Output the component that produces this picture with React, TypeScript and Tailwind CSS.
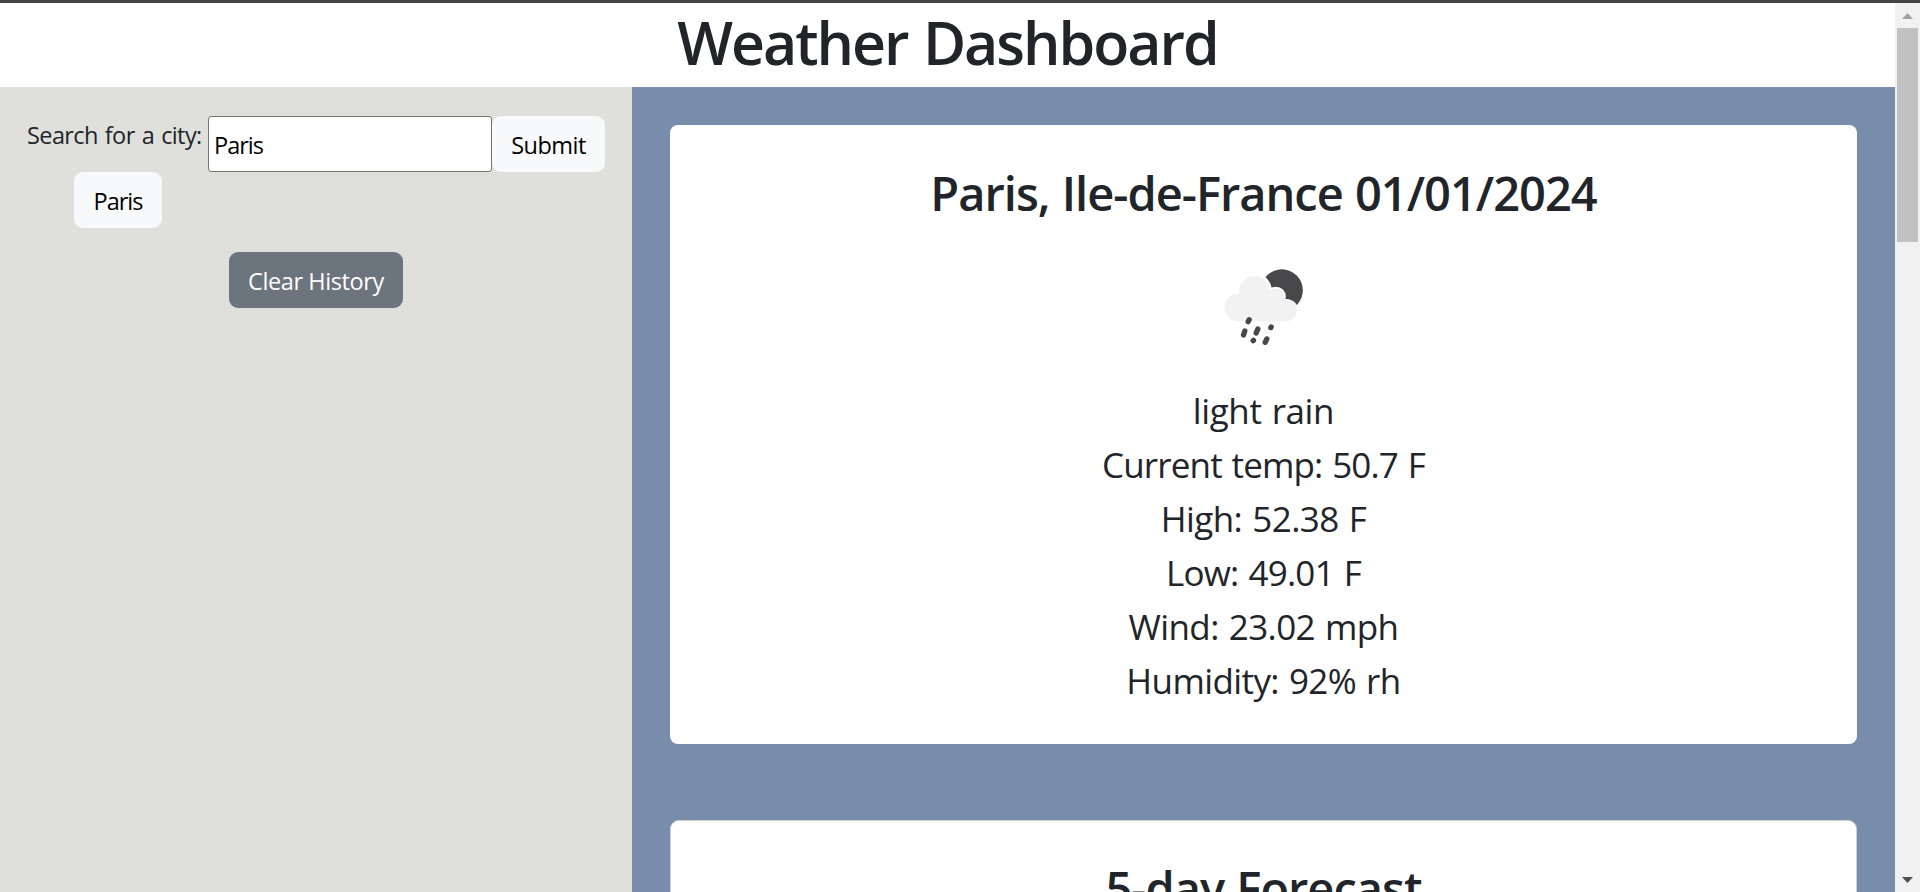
const readings = [
  { text: 'light rain', spacing: 'tracking-[-0.4px]' },
  { text: 'Current temp: 50.7 F', spacing: 'tracking-[-0.85px]' },
  { text: 'High: 52.38 F', spacing: 'tracking-[-0.55px]' },
  { text: 'Low: 49.01 F', spacing: 'tracking-[-0.75px]' },
  { text: 'Wind: 23.02 mph', spacing: 'tracking-[-0.6px]' },
  { text: 'Humidity: 92% rh', spacing: 'tracking-[-0.6px]' },
];

function RainIcon() {
  return (
    <svg className="block h-[110px] w-[130px]" viewBox="-4.5 0 390 330" fill="none">
      <circle cx="244" cy="121" r="63" fill="#48484a" />
      <g fill="#fff">
        <circle cx="162" cy="122" r="52" />
        <circle cx="226" cy="140" r="30" />
        <circle cx="257" cy="184" r="37" />
      </g>
      <g fill="#f2f2f2">
        <circle cx="162" cy="124" r="46" />
        <circle cx="113" cy="172" r="41" />
        <circle cx="226" cy="140" r="25" />
        <circle cx="257" cy="182" r="32" />
        <path d="M113 130H230L257 150V214H113Z" />
      </g>
      <g stroke="#48484a" strokeWidth="16" strokeLinecap="round">
        <path d="M146 209L143 215M133 243L129 255M172 237L167 249M212 231L211 233M159 271L158 272M199 267L194 277" />
      </g>
    </svg>
  );
}

function Scrollbar() {
  return (
    <div className="flex w-[25px] shrink-0 flex-col items-center bg-[#f1f1f1]">
      <div className="flex h-[25px] items-center">
        <svg className="block h-[6px] w-[11px]" viewBox="0 0 11 6">
          <path d="M0 6L5.5 0L11 6Z" fill="#a3a3a3" />
        </svg>
      </div>
      <div className="h-[214px] w-[21px] bg-[#c1c1c1]" />
      <div className="mt-auto flex h-[25px] items-center">
        <svg className="block h-[6px] w-[11px]" viewBox="0 0 11 6">
          <path d="M0 0L5.5 6L11 0Z" fill="#505050" />
        </svg>
      </div>
    </div>
  );
}

export default function App() {
  return (
    <div className="flex h-screen flex-col overflow-hidden bg-white font-['Open_Sans',sans-serif] text-[23.5px] leading-9 text-[#212529]">
      <div className="h-[3px] shrink-0 bg-[#444444]" />
      <div className="flex min-h-0 flex-1">
        <div className="flex min-w-0 flex-1 flex-col">
          <h1 className="h-[84px] shrink-0 pt-[3px] text-center text-[59px] leading-[72px] font-semibold tracking-[-2px] whitespace-nowrap [word-spacing:2px]">
            Weather Dashboard
          </h1>
          <div className="flex min-h-0 flex-1">
            <aside className="w-[632px] shrink-0 bg-[#dfe0db] pt-[29px]">
              <form className="flex pl-[27px]" onSubmit={(e) => e.preventDefault()}>
                <label htmlFor="city" className="w-[181px] pt-px tracking-[-0.6px] whitespace-nowrap [word-spacing:1.5px]">
                  Search for a city:
                </label>
                <input
                  id="city"
                  defaultValue="Paris"
                  className="h-14 w-[284px] rounded-[3px] border border-[#767676] bg-white px-[5px] pt-[2px] tracking-[-1px] text-black"
                />
                <button className="h-14 w-[113px] rounded-[9px] bg-[#f8f9fa] pt-[2px] tracking-[-0.5px] text-black">
                  Submit
                </button>
              </form>
              <div className="pl-[74px]">
                <button className="block h-14 w-[88px] rounded-[9px] bg-[#f8f9fa] pt-[2px] tracking-[-1px] text-black">
                  Paris
                </button>
              </div>
              <div className="flex justify-center pt-6">
                <button className="h-14 w-[174px] rounded-[9px] bg-[#6c757d] pt-[2px] tracking-[-0.4px] whitespace-nowrap text-white">
                  Clear History
                </button>
              </div>
            </aside>
            <main className="flex min-w-0 flex-1 flex-col gap-[76px] overflow-hidden bg-[#788dab] px-[38px] pt-[38px]">
              <section className="flex h-[619px] shrink-0 flex-col items-center rounded-[8px] bg-white pt-[39px]">
                <h2 className="text-[47px] leading-[58px] font-semibold tracking-[-1px] whitespace-nowrap [word-spacing:1px]">
                  Paris, Ile-de-France 01/01/2024
                </h2>
                <div className="mt-[28px] mb-[24px]">
                  <RainIcon />
                </div>
                {readings.map((r) => (
                  <p key={r.text} className={`text-[35px] leading-[54px] whitespace-nowrap [word-spacing:1.5px] ${r.spacing}`}>
                    {r.text}
                  </p>
                ))}
              </section>
              <section className="flex h-[619px] shrink-0 flex-col items-center rounded-[9px] border border-[#d2d2d2] bg-white pt-[38px]">
                <h2 className="text-[47px] leading-[58px] font-semibold tracking-[-1px] whitespace-nowrap [word-spacing:1px]">
                  5-day Forecast
                </h2>
              </section>
            </main>
          </div>
        </div>
        <Scrollbar />
      </div>
    </div>
  );
}
